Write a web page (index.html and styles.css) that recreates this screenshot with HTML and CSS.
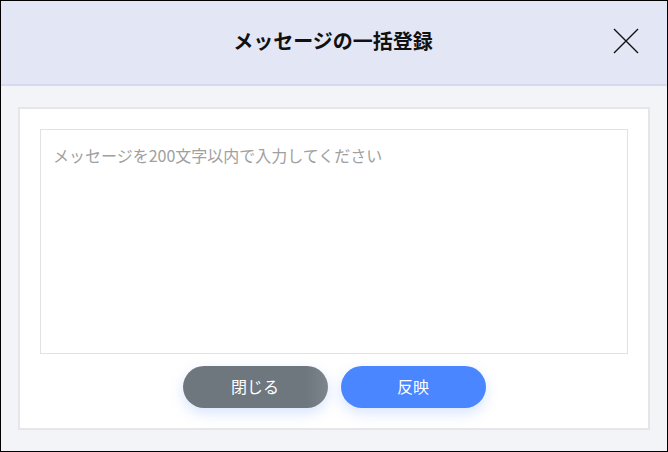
FILE: index.html
```html
<!DOCTYPE html>
<html lang="ja">
<head>
<meta charset="utf-8">
<title>メッセージの一括登録</title>
<link rel="stylesheet" href="styles.css">
</head>
<body>
<div class="modal">
  <header class="modal-header">
    <h1 class="modal-title">メッセージの一括登録</h1>
    <button class="close-btn" aria-label="閉じる">
      <svg width="26" height="26" viewBox="0 0 26 26"><path d="M1 1 L25 25 M25 1 L1 25" stroke="#111" stroke-width="1.4" fill="none"/></svg>
    </button>
  </header>
  <main class="modal-body">
    <div class="card">
      <textarea class="message-input" placeholder="メッセージを200文字以内で入力してください"></textarea>
      <div class="actions">
        <button class="btn btn-close">閉じる</button>
        <button class="btn btn-apply">反映</button>
      </div>
    </div>
  </main>
</div>
</body>
</html>
```
FILE: styles.css
```css
* { box-sizing: border-box; }
html, body { margin: 0; padding: 0; }
body {
  font-family: "Noto Sans CJK JP", "Noto Sans", sans-serif;
  width: 668px;
  height: 452px;
  overflow: hidden;
}
.modal {
  width: 668px;
  height: 452px;
  border: 1px solid #000;
  display: flex;
  flex-direction: column;
  background: #f3f4f8;
}
.modal-header {
  height: 85px;
  flex: none;
  background: #e3e7f5;
  border-bottom: 2px solid #d6d9f0;
  display: flex;
  align-items: center;
  justify-content: center;
  position: relative;
}
.modal-title {
  margin: 0;
  font-size: 20px;
  font-weight: 700;
  color: #111;
  letter-spacing: 0;
  padding-bottom: 4px;
  padding-right: 2px;
}
.close-btn {
  position: absolute;
  right: 28px;
  top: 27px;
  width: 26px;
  height: 26px;
  padding: 0;
  border: 0;
  background: none;
  display: block;
}
.close-btn svg { display: block; }
.modal-body {
  flex: 1;
  padding: 21px 17px 21px 17px;
  display: flex;
}
.card {
  flex: 1;
  background: #fff;
  border: 2px solid #e6e6e8;
  padding: 20px 20px 20px 20px;
  display: flex;
  flex-direction: column;
}
.message-input {
  display: block;
  width: 100%;
  height: 225px;
  flex: none;
  border: 1px solid #e2e2e4;
  resize: none;
  padding: 13px 12px;
  font-family: "Noto Sans CJK JP", "Noto Sans", sans-serif;
  font-size: 16px;
  line-height: 1.5;
  color: #333;
  outline: none;
}
.message-input::placeholder { color: #a0a0a0; }
.actions {
  margin-top: 12px;
  display: flex;
  justify-content: center;
  gap: 13px;
}
.btn {
  width: 145px;
  height: 42px;
  border: 0;
  border-radius: 21px;
  color: #fff;
  font-family: "Noto Sans CJK JP", "Noto Sans", sans-serif;
  font-size: 16px;
  padding: 0 0 2px 0;
  box-shadow: 0 5px 14px rgba(74, 134, 255, 0.22);
}
.btn-close {
  background: linear-gradient(90deg, #6e767e 0%, #6e767e 85%, #7e868c 100%);
}
.btn-apply {
  background: #4a86ff;
}
```
